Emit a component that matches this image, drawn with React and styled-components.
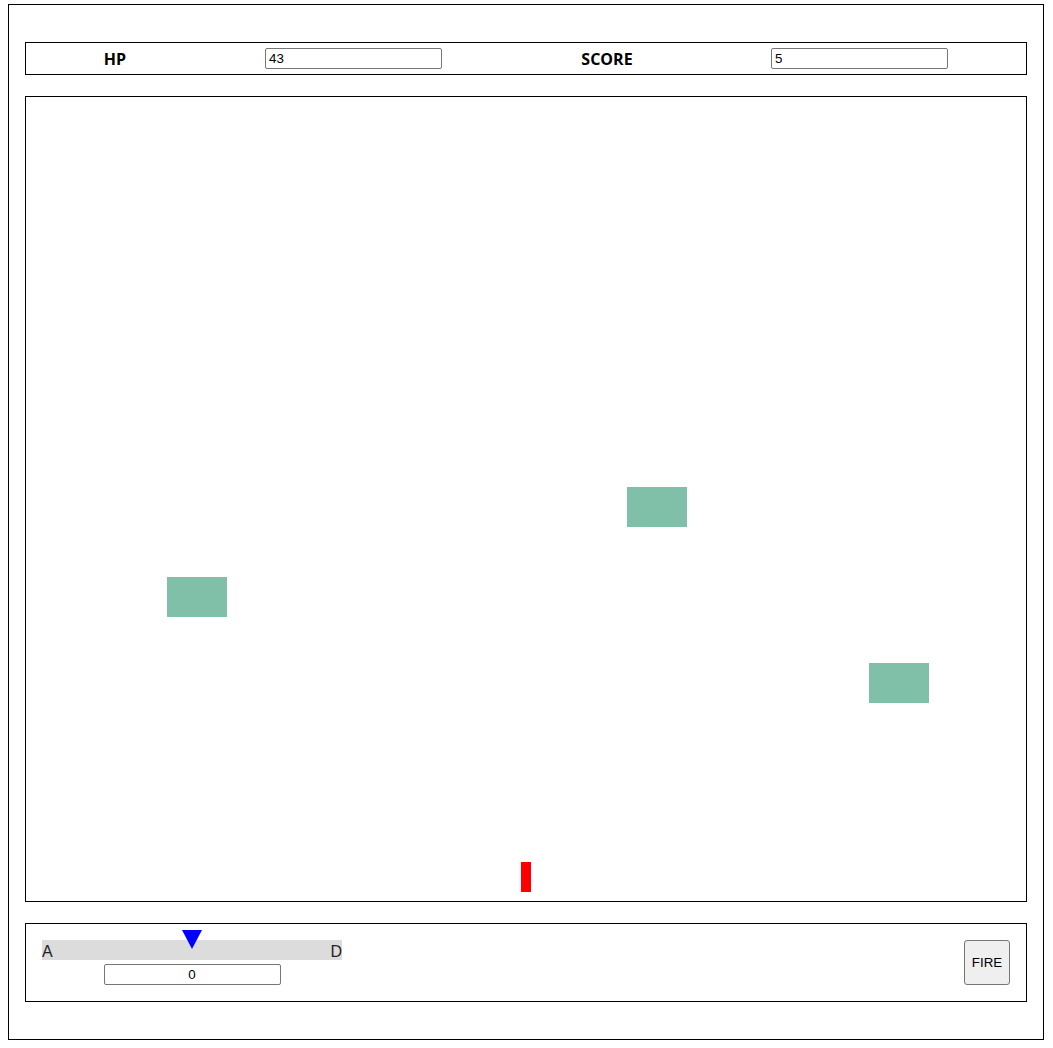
import React from "react"
import styled, { createGlobalStyle } from "styled-components"

const GlobalStyle = createGlobalStyle`
  html, body {
    margin: 0;
    padding: 0;
    background: #fff;
  }
  body {
    font-family: "Liberation Sans", Arial, sans-serif;
  }
`

const Frame = styled.div`
  box-sizing: border-box;
  width: 1036px;
  height: 1036px;
  margin: 4px 0 0 8px;
  border: 1px solid #000;
  padding: 37px 16px;
  display: flex;
  flex-direction: column;
  gap: 21px;
`

const StatusBar = styled.div`
  box-sizing: border-box;
  height: 33px;
  border: 1px solid #000;
  display: grid;
  grid-template-columns: 178px 299px 208px 297px;
  align-items: center;
  justify-items: center;
`

const StatLabel = styled.span`
  font-family: "Open Sans", sans-serif;
  font-weight: 700;
  font-size: 16px;
  color: #000;
`

const Field = styled.input`
  box-sizing: border-box;
  width: 177px;
  height: 21px;
  border: 1px solid #767676;
  border-radius: 2px;
  padding: 0 3px;
  font-family: "Liberation Sans", Arial, sans-serif;
  font-size: 13.33px;
  color: #000;
  background: #fff;
  text-align: ${p => (p.$center ? "center" : "left")};
  outline: none;
`

const Arena = styled.div`
  position: relative;
  box-sizing: border-box;
  height: 806px;
  border: 1px solid #000;
  overflow: hidden;
`

const Enemy = styled.div`
  position: absolute;
  width: 60px;
  height: 40px;
  background: #80c0a8;
`

const Ship = styled.div`
  position: absolute;
  width: 10px;
  height: 30px;
  background: #f00;
`

const Controls = styled.div`
  box-sizing: border-box;
  height: 79px;
  border: 1px solid #000;
  padding: 0 16px;
  display: flex;
  align-items: center;
  justify-content: space-between;
`

const Steering = styled.div`
  display: flex;
  flex-direction: column;
  align-items: center;
  gap: 4px;
`

const Track = styled.div`
  position: relative;
  width: 300px;
  height: 20px;
  background: #dcdcdc;
  display: flex;
  justify-content: space-between;
  align-items: flex-end;
`

const TrackLabel = styled.span`
  font-size: 16px;
  line-height: 16px;
  color: #222;
`

const Pointer = styled.div`
  position: absolute;
  top: -10px;
  left: ${p => p.$pos}%;
  margin-left: -10px;
  width: 0;
  height: 0;
  border-left: 10px solid transparent;
  border-right: 10px solid transparent;
  border-top: 19px solid #00f;
`

const FireButton = styled.button`
  box-sizing: border-box;
  width: 46px;
  height: 45px;
  padding: 0;
  border: 1px solid #767676;
  border-radius: 3px;
  background: #efefef;
  font-family: "Liberation Sans", Arial, sans-serif;
  font-size: 13.33px;
  color: #000;
`

const enemies = [
  { x: 141, y: 480 },
  { x: 601, y: 390 },
  { x: 843, y: 566 },
]

export default function App() {
  const steer = 0
  return (
    <>
      <GlobalStyle />
      <Frame>
        <StatusBar>
          <StatLabel>HP</StatLabel>
          <Field readOnly value="43" />
          <StatLabel>SCORE</StatLabel>
          <Field readOnly value="5" />
        </StatusBar>
        <Arena>
          {enemies.map((e, i) => (
            <Enemy key={i} style={{ left: e.x, top: e.y }} />
          ))}
          <Ship style={{ left: 495, top: 765 }} />
        </Arena>
        <Controls>
          <Steering>
            <Track>
              <TrackLabel>A</TrackLabel>
              <Pointer $pos={50 + steer * 50} />
              <TrackLabel>D</TrackLabel>
            </Track>
            <Field readOnly $center value={String(steer)} />
          </Steering>
          <FireButton>FIRE</FireButton>
        </Controls>
      </Frame>
    </>
  )
}
